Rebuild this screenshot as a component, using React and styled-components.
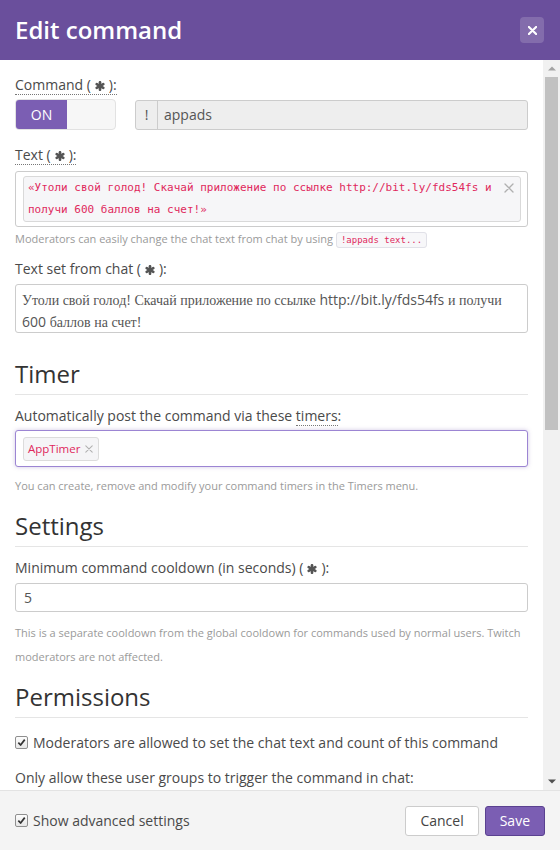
import React from 'react';
import styled, { createGlobalStyle } from 'styled-components';

const GlobalStyle = createGlobalStyle`
  html, body { margin: 0; padding: 0; background: #fff; }
  body { font-family: "Open Sans", "Noto Sans", sans-serif; }
  * { box-sizing: border-box; }
`;

const Modal = styled.div`
  width: 560px;
  height: 850px;
  display: flex;
  flex-direction: column;
  overflow: hidden;
  background: #fff;
`;

const Header = styled.header`
  flex: 0 0 60px;
  background: #6a4f9c;
  display: flex;
  align-items: center;
  justify-content: space-between;
  padding: 0 16px 0 15px;
`;

const Title = styled.h1`
  margin: 0;
  font-size: 24px;
  font-weight: 600;
  line-height: 1;
  color: #fff;
`;

const CloseButton = styled.button`
  width: 24px;
  height: 26px;
  border: 0;
  padding: 0;
  border-radius: 4px;
  background: rgba(255, 255, 255, 0.17);
  display: flex;
  align-items: center;
  justify-content: center;
  cursor: pointer;
`;

const Main = styled.div`
  flex: 1;
  min-height: 0;
  display: flex;
`;

const Scroller = styled.div`
  flex: 1;
  min-width: 0;
  overflow-y: auto;
  scrollbar-width: none;
  padding: 15px 15px 30px;
  &::-webkit-scrollbar { display: none; }
`;

const ScrollTrack = styled.div`
  flex: 0 0 17px;
  background: #f1f1f1;
  display: flex;
  flex-direction: column;
`;

const ScrollArrow = styled.div`
  flex: 0 0 17px;
  display: flex;
  align-items: center;
  justify-content: center;
`;

const ThumbArea = styled.div`
  flex: 1;
  padding: 0 2px;
`;

const Thumb = styled.div`
  background: #c1c1c1;
`;

const Arrow = ({ dir, color }) => (
  <ScrollArrow>
    <svg width="8" height="5" viewBox="0 0 8 5">
      {dir === 'up' ? (
        <polygon points="0,4.5 4,0.5 8,4.5" fill={color} />
      ) : (
        <polygon points="0,0.5 8,0.5 4,4.5" fill={color} />
      )}
    </svg>
  </ScrollArrow>
);

const FormGroup = styled.div`
  margin-bottom: ${(p) => (p.$mb ?? 15)}px;
`;

const Label = styled.label`
  display: block;
  font-size: 14px;
  line-height: 20px;
  color: #4a4a4a;
  margin-bottom: ${(p) => (p.$mb ?? 5)}px;
`;

const Dotted = styled.span`
  border-bottom: 1px dotted #777;
`;

const AsteriskWrap = styled.span`
  display: inline-block;
  margin: 0 4px;
  vertical-align: -1px;
  line-height: 0;
`;

const Req = () => (
  <AsteriskWrap>
    <svg width="10" height="10" viewBox="0 0 10 10">
      <g stroke="#555" strokeWidth="2.6" strokeLinecap="round">
        <path d="M5 1.2 V8.8" />
        <path d="M1.7 3.1 L8.3 6.9" />
        <path d="M8.3 3.1 L1.7 6.9" />
      </g>
    </svg>
  </AsteriskWrap>
);

const CommandRow = styled.div`
  display: grid;
  grid-template-columns: 101px 1fr;
  column-gap: 19px;
  align-items: center;
`;

const Toggle = styled.div`
  height: 31px;
  display: flex;
  border: 1px solid #e2e2e2;
  border-radius: 4px;
  background: #f7f7f7;
  overflow: hidden;
`;

const ToggleOn = styled.span`
  width: 51px;
  background: #7b5eb3;
  color: #fff;
  font-size: 14px;
  display: flex;
  align-items: center;
  justify-content: center;
`;

const InputGroup = styled.div`
  height: 30px;
  display: flex;
  border: 1px solid #ccc;
  border-radius: 3px;
  background: #eee;
  color: #555;
  font-size: 14px;
`;

const Addon = styled.span`
  width: 22px;
  border-right: 1px solid #ccc;
  display: flex;
  align-items: center;
  justify-content: center;
`;

const AddonValue = styled.span`
  display: flex;
  align-items: center;
  padding-left: 6px;
`;

const TagBox = styled.div`
  border: 1px solid #ccc;
  border-radius: 3px;
  padding: ${(p) => p.$pad || '4px 6px 4px 7px'};
  background: #fff;
  ${(p) =>
    p.$focus &&
    `border-color: #9c85d3; box-shadow: 0 0 4px rgba(123, 94, 179, 0.35);`}
`;

const MonoTag = styled.div`
  display: flex;
  align-items: flex-start;
  background: #f6f6f8;
  border: 1px solid #d9d9d9;
  border-radius: 3px;
  padding: 0 6px 0 4px;
`;

const MonoText = styled.span`
  flex: 1;
  font-family: "DejaVu Sans Mono", "Liberation Mono", monospace;
  font-size: 11px;
  line-height: 22px;
  color: #e0285c;
  padding-right: 12px;
`;

const RemoveX = styled.span`
  flex: none;
  display: flex;
  align-items: center;
  justify-content: center;
  height: ${(p) => p.$h || 22}px;
  width: ${(p) => p.$w || 12}px;
`;

const XIcon = ({ size = 9, color = '#b0b0b0', stroke = 1.3 }) => (
  <svg width={size} height={size} viewBox="0 0 10 10">
    <path d="M1 1 L9 9 M9 1 L1 9" stroke={color} strokeWidth={stroke} strokeLinecap="round" />
  </svg>
);

const Help = styled.div`
  font-size: 11px;
  line-height: ${(p) => p.$lh || 20}px;
  color: #9a9a9a;
  margin-top: ${(p) => (p.$mt ?? 3)}px;
`;

const Code = styled.code`
  font-family: "DejaVu Sans Mono", "Liberation Mono", monospace;
  font-size: 9px;
  color: #e0285c;
  background: #f7f7f9;
  border: 1px solid #e1e1e8;
  border-radius: 3px;
  padding: 2px 4px;
`;

const FakeTextarea = styled.div`
  height: 49px;
  overflow: hidden;
  border: 1px solid #ccc;
  border-radius: 3px;
  padding: 5px 8px 0 6px;
  font-size: 14px;
  line-height: 20.5px;
  color: #555;
`;

const Cy = styled.span`
  font-family: "Liberation Serif", "DejaVu Serif", serif;
`;

const SectionTitle = styled.h3`
  margin: ${(p) => (p.$mt ?? 15)}px 0 11px;
  font-size: 24px;
  font-weight: 400;
  line-height: 26px;
  color: #333;
  padding-bottom: 7px;
  border-bottom: 1px solid #e5e5e5;
`;

const TimerTag = styled.span`
  display: inline-flex;
  align-items: center;
  height: 24px;
  padding: 0 4px 0 4px;
  background: #f5f5f7;
  border: 1px solid #dcdcdc;
  border-radius: 3px;
  font-size: 11.5px;
  color: #e0285c;
  gap: 4px;
`;

const TextInput = styled.div`
  height: 29px;
  border: 1px solid #ccc;
  border-radius: 3px;
  padding: 0 8px;
  display: flex;
  align-items: center;
  font-size: 14px;
  color: #555;
`;

const CheckRow = styled.label`
  display: flex;
  align-items: center;
  gap: 5px;
  font-size: 14px;
  line-height: 20px;
  color: #4a4a4a;
  margin-top: ${(p) => (p.$mt ?? 0)}px;
  margin-bottom: ${(p) => (p.$mb ?? 0)}px;
`;

const CheckBox = styled.span`
  width: 13px;
  height: 13px;
  flex: none;
  border: 1px solid #8f8f8f;
  border-radius: 2px;
  background: linear-gradient(#fdfdfd, #e6e6e6);
  display: flex;
  align-items: center;
  justify-content: center;
`;

const Check = () => (
  <CheckBox>
    <svg width="9" height="9" viewBox="0 0 10 10">
      <path d="M1.5 5.2 L4 7.8 L8.6 1.8" fill="none" stroke="#333" strokeWidth="1.9" strokeLinejoin="round" />
    </svg>
  </CheckBox>
);

const GroupList = styled.div`
  display: flex;
  flex-direction: column;
  gap: 8px;
  margin-bottom: 15px;
`;

const Footer = styled.footer`
  flex: 0 0 60px;
  border-top: 1px solid #e3e3e3;
  background: #f4f4f4;
  display: flex;
  align-items: center;
  justify-content: space-between;
  padding: 0 15px;
`;

const Buttons = styled.div`
  display: flex;
  gap: 6px;
`;

const Button = styled.button`
  height: 30px;
  padding: 0 14px;
  font-family: "Open Sans", sans-serif;
  font-size: 14px;
  border-radius: 3px;
  cursor: pointer;
  border: 1px solid ${(p) => (p.$primary ? '#5a4190' : '#ccc')};
  background: ${(p) => (p.$primary ? '#7b5eb3' : '#fff')};
  color: ${(p) => (p.$primary ? '#fff' : '#444')};
`;

const groups = ['Everyone', 'Regulars', 'Subscribers', 'VIPs', 'Moderators', 'Broadcaster'];

export default function App() {
  return (
    <>
      <GlobalStyle />
      <Modal>
        <Header>
          <Title>Edit command</Title>
          <CloseButton aria-label="Close">
            <XIcon size={9} color="#fff" stroke={2.4} />
          </CloseButton>
        </Header>
        <Main>
          <Scroller>
            <FormGroup>
              <Label $mb={4}>
                <Dotted>
                  Command (<Req />):
                </Dotted>
              </Label>
              <CommandRow>
                <Toggle>
                  <ToggleOn>ON</ToggleOn>
                </Toggle>
                <InputGroup>
                  <Addon>!</Addon>
                  <AddonValue>appads</AddonValue>
                </InputGroup>
              </CommandRow>
            </FormGroup>

            <FormGroup $mb={9}>
              <Label $mb={6}>
                <Dotted>
                  Text (<Req />):
                </Dotted>
              </Label>
              <TagBox>
                <MonoTag>
                  <MonoText>
                    «Утоли свой голод! Скачай приложение по ссылке http://bit.ly/fds54fs и получи 600 баллов на счет!»
                  </MonoText>
                  <RemoveX $w={10}>
                    <XIcon size={10} />
                  </RemoveX>
                </MonoTag>
              </TagBox>
              <Help $mt={2}>
                Moderators can easily change the chat text from chat by using <Code>!appads text...</Code>
              </Help>
            </FormGroup>

            <FormGroup $mb={0}>
              <Label>
                Text set from chat (<Req />):
              </Label>
              <FakeTextarea>
                <Cy>Утоли свой голод! Скачай приложение по ссылке</Cy> http://bit.ly/fds54fs{' '}
                <Cy>и получи</Cy> 600 <Cy>баллов на счет!</Cy>
              </FakeTextarea>
            </FormGroup>

            <SectionTitle $mt={28}>Timer</SectionTitle>
            <FormGroup $mb={0}>
              <Label $mb={4}>
                Automatically post the command via these <Dotted>timers</Dotted>:
              </Label>
              <TagBox $focus $pad="5px 7px">
                <TimerTag>
                  AppTimer
                  <RemoveX $h={22} $w={10}>
                    <XIcon size={8} />
                  </RemoveX>
                </TimerTag>
              </TagBox>
              <Help $mt={7} $lh={24}>
                You can create, remove and modify your command timers in the Timers menu.
              </Help>
            </FormGroup>

            <SectionTitle>Settings</SectionTitle>
            <FormGroup $mb={0}>
              <Label>
                Minimum command cooldown (in seconds) (<Req />):
              </Label>
              <TextInput>5</TextInput>
              <Help $mt={9} $lh={24}>
                This is a separate cooldown from the global cooldown for commands used by normal users. Twitch
                moderators are not affected.
              </Help>
            </FormGroup>

            <SectionTitle>Permissions</SectionTitle>
            <CheckRow $mt={15} $mb={15}>
              <Check />
              Moderators are allowed to set the chat text and count of this command
            </CheckRow>
            <Label $mb={8}>Only allow these user groups to trigger the command in chat:</Label>
            <GroupList>
              {groups.map((g) => (
                <CheckRow key={g}>
                  <Check />
                  {g}
                </CheckRow>
              ))}
            </GroupList>

            <SectionTitle>Advanced</SectionTitle>
            <FormGroup>
              <Label>Count:</Label>
              <TextInput>0</TextInput>
            </FormGroup>
            <FormGroup>
              <Label>Aliases:</Label>
              <TextInput>!app, !download</TextInput>
            </FormGroup>
          </Scroller>
          <ScrollTrack aria-hidden="true">
            <Arrow dir="up" color="#a3a3a3" />
            <ThumbArea>
              <Thumb style={{ height: 353 }} />
            </ThumbArea>
            <Arrow dir="down" color="#505050" />
          </ScrollTrack>
        </Main>
        <Footer>
          <CheckRow>
            <Check />
            Show advanced settings
          </CheckRow>
          <Buttons>
            <Button>Cancel</Button>
            <Button $primary>Save</Button>
          </Buttons>
        </Footer>
      </Modal>
    </>
  );
}
